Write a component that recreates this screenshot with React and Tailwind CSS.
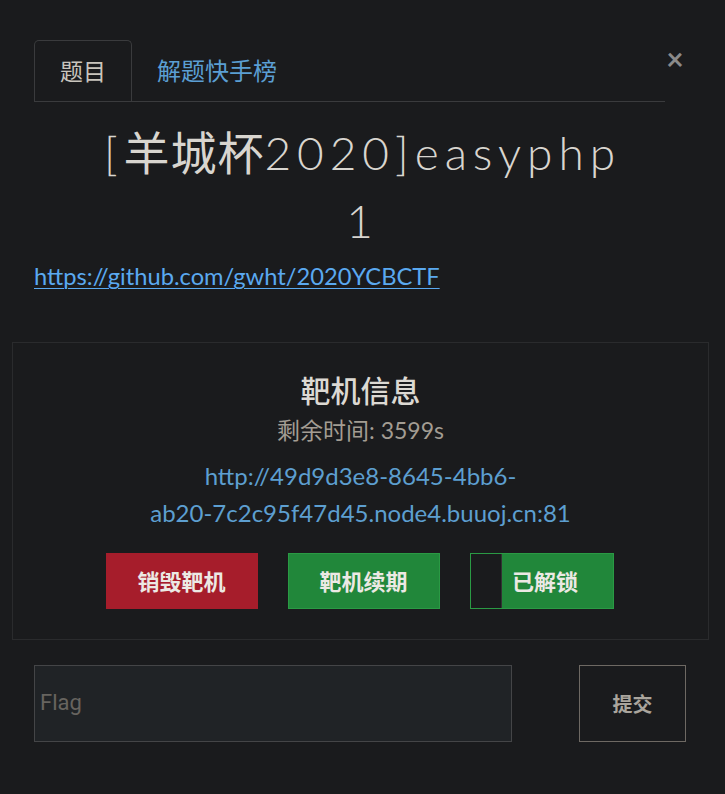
import React from "react";

const cjk = { fontFamily: 'Lato, "Noto Sans CJK SC", sans-serif' };

const App = () => {
  return (
    <div className="w-[725px] h-[794px] bg-[#1a1b1d] text-[#d6d3cd] overflow-hidden" style={cjk}>
      {/* TABS */}
      <div className="flex items-start pt-[40px] pl-[34px]">
        <div className="flex w-[631px] border-b border-[#3a3b3d]">
          <div className="h-[61px] px-[25px] flex items-center border border-b-0 border-[#3a3b3d] rounded-t-[5px] text-[23px] text-[#c9c5bd] -mb-px bg-[#1a1b1d]">
            题目
          </div>
          <div className="h-[61px] px-[25px] flex items-center text-[24px] text-[#5b9fd3]">
            解题快手榜
          </div>
        </div>
        <button className="ml-0 mt-[6px] w-[20px] h-[24px] flex items-center justify-center text-[30px] font-bold text-[#8a8a8a] leading-none">
          ×
        </button>
      </div>

      {/* TITLE */}
      <div className="px-[34px]">
        <h1 className="mt-[17px] text-center text-[46px] leading-[68px] font-light tracking-[0.13em] text-[#d8d5cf]">
          [<span className="font-normal tracking-[0.02em]">羊城杯</span>2020]easyphp
          <br />1
        </h1>
        <a href="#" className="block mt-[6px] text-[23.7px] leading-[30px] text-[#5aa9f0] underline underline-offset-[3px] decoration-1 w-fit">
          https://github.com/gwht/2020YCBCTF
        </a>
      </div>

      {/* INSTANCE CARD */}
      <div className="mt-[51px] ml-[12px] w-[697px] border border-[#2a2b2d] flex flex-col items-center pt-[26px] pb-[30px]">
        <div className="text-[30px] leading-[42px] font-medium text-[#dcd9d3]">靶机信息</div>
        <div className="text-[23px] leading-[32px] text-[#a39d93] mt-[3px]">剩余时间: 3599s</div>
        <div className="mt-[11px] text-[24px] leading-[37px] text-[#5d9fd0] text-center">
          http://49d9d3e8-8645-4bb6-
          <br />
          ab20-7c2c95f47d45.node4.buuoj.cn:81
        </div>
        <div className="mt-[22px] mr-[2px] flex gap-[30px]">
          <button className="w-[152px] h-[56px] bg-[#a61d2b] text-[22px] font-bold text-[#ece9e4]">
            销毁靶机
          </button>
          <button className="w-[152px] h-[56px] bg-[#21873a] border border-[#2a9a44] text-[22px] font-bold text-[#ece9e4]">
            靶机续期
          </button>
          <button className="w-[144px] h-[56px] border border-[#2a9a44] flex">
            <div className="w-[31px] h-full bg-[#1a1b1d] border-r border-[#333]" />
            <div className="flex-1 h-full bg-[#21873a] flex items-center justify-center pr-[24px] text-[22px] font-bold text-[#ece9e4]">
              已解锁
            </div>
          </button>
        </div>
      </div>

      {/* FLAG */}
      <div className="mt-[25px] flex pl-[34px]">
        <input
          placeholder="Flag"
          className="w-[478px] h-[77px] bg-[#202326] border border-[#444547] px-[5px] pb-[3px] text-[22px] text-[#ccc] placeholder:text-[#67645f] outline-none"
          style={{ fontFamily: 'Roboto, "Liberation Sans", sans-serif' }}
        />
        <button className="ml-[67px] w-[107px] h-[77px] border border-[#6e6963] text-[20px] font-bold text-[#aaa59d]">
          提交
        </button>
      </div>
    </div>
  );
};

export default App;
